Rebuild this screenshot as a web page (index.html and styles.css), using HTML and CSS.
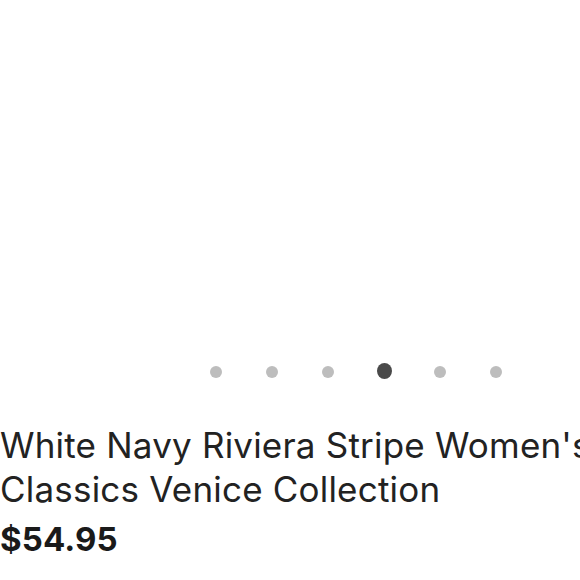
FILE: index.html
```html
<!DOCTYPE html>
<html lang="en">
<head>
<meta charset="utf-8">
<title>Product</title>
<link rel="stylesheet" href="styles.css">
</head>
<body>
<div class="page">
  <div class="gallery"></div>
  <div class="dots">
    <span class="slot"><span class="dot"></span></span>
    <span class="slot"><span class="dot"></span></span>
    <span class="slot"><span class="dot"></span></span>
    <span class="slot"><span class="dot active"></span></span>
    <span class="slot"><span class="dot"></span></span>
    <span class="slot"><span class="dot"></span></span>
  </div>
  <h1 class="title">White Navy Riviera Stripe Women's Classics Venice Collection</h1>
  <div class="price">$54.95</div>
</div>
</body>
</html>
```
FILE: styles.css
```css
html, body {
  margin: 0;
  padding: 0;
  background: #fff;
  overflow: hidden;
}
.page {
  width: 712px;
  font-family: Inter, "Liberation Sans", sans-serif;
  color: #222;
}
.gallery {
  height: 352px;
  background: #fff;
}
.dots {
  height: 40px;
  display: flex;
  justify-content: center;
  align-items: center;
}
.slot {
  width: 56px;
  display: flex;
  justify-content: center;
  align-items: center;
}
.dot {
  width: 12px;
  height: 12px;
  border-radius: 50%;
  background: #bdbdbd;
}
.dot.active {
  width: 15px;
  height: 16px;
  margin-top: -2px;
  background: #4a4a4a;
}
.title {
  margin: 31px 0 0;
  font-size: 35px;
  font-weight: 400;
  line-height: 44px;
  letter-spacing: 0.2px;
  color: #222;
}
.price {
  margin-top: 8px;
  font-size: 33px;
  font-weight: 700;
  line-height: 40px;
  letter-spacing: 0.1px;
  color: #1a1a1a;
}
```
